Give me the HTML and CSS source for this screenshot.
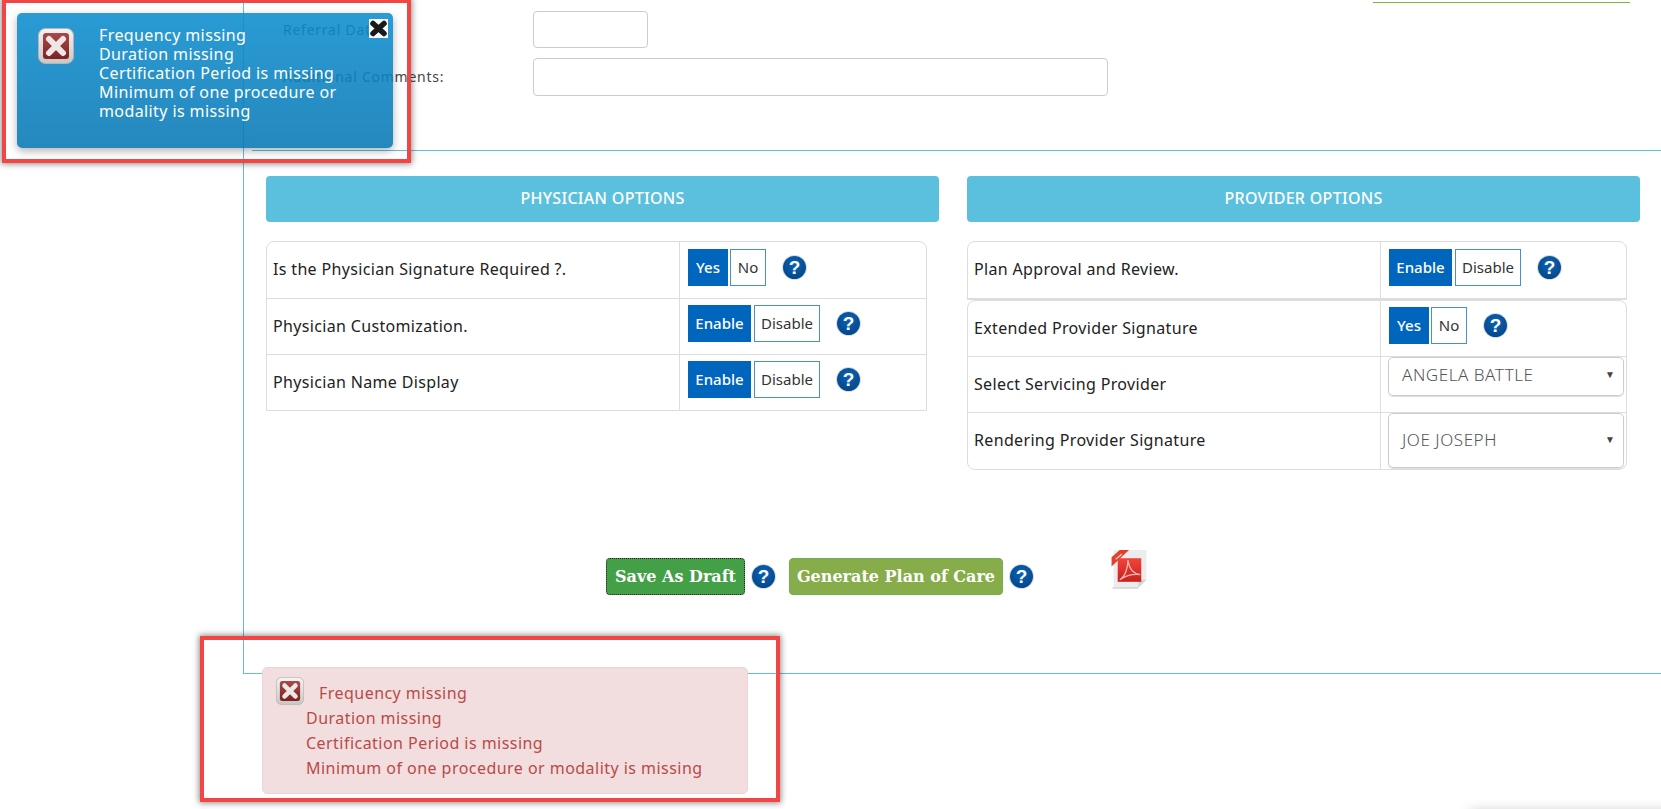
FILE: index.html
```html
<!DOCTYPE html>
<html lang="en">
<head>
<meta charset="utf-8">
<title>Plan of Care</title>
<link rel="stylesheet" href="styles.css">
</head>
<body>
<svg class="defs" width="0" height="0" aria-hidden="true">
  <defs>
    <linearGradient id="errframe" x1="0" y1="0" x2="0" y2="1">
      <stop offset="0" stop-color="#f6f3f2"/>
      <stop offset="1" stop-color="#c9c6c6"/>
    </linearGradient>
    <linearGradient id="errfill" x1="0" y1="0" x2="0" y2="1">
      <stop offset="0" stop-color="#a84a4a"/>
      <stop offset="1" stop-color="#7c2222"/>
    </linearGradient>
    <linearGradient id="pdfred" x1="0" y1="0" x2="0" y2="1">
      <stop offset="0" stop-color="#f0453a"/>
      <stop offset="1" stop-color="#c9201c"/>
    </linearGradient>
    <symbol id="erricon" viewBox="0 0 36 36">
      <rect x="0.5" y="0.5" width="35" height="35" rx="7" fill="url(#errframe)" stroke="#b5b5b5" stroke-width="1"/>
      <rect x="5" y="5" width="26" height="26" rx="3" fill="url(#errfill)"/>
      <path d="M11 11l14 14M25 11l-14 14" stroke="#efe6e6" stroke-width="6" stroke-linecap="round"/>
    </symbol>
  </defs>
</svg>

<div class="page">
  <div class="topline"></div>
  <main class="panel">
    <div class="form-row first">
      <label class="form-label">Referral Date:</label>
      <input class="field short" type="text">
    </div>
    <div class="form-row second">
      <label class="form-label">Additional Comments:</label>
      <input class="field long" type="text">
    </div>
    <div class="rule"></div>
    <div class="columns">
      <section class="col">
        <h2 class="col-head">PHYSICIAN OPTIONS</h2>
        <div class="table wide">
          <div class="row">
            <div class="cell-label">Is the Physician Signature Required ?.</div>
            <div class="cell-ctl">
              <span class="tgl on yes">Yes</span><span class="tgl off no">No</span><span class="help">?</span>
            </div>
          </div>
          <div class="row">
            <div class="cell-label">Physician Customization.</div>
            <div class="cell-ctl tight">
              <span class="tgl on en">Enable</span><span class="tgl off dis">Disable</span><span class="help">?</span>
            </div>
          </div>
          <div class="row">
            <div class="cell-label">Physician Name Display</div>
            <div class="cell-ctl tight">
              <span class="tgl on en">Enable</span><span class="tgl off dis">Disable</span><span class="help">?</span>
            </div>
          </div>
        </div>
      </section>
      <section class="col">
        <h2 class="col-head">PROVIDER OPTIONS</h2>
        <div class="table">
          <div class="row">
            <div class="cell-label">Plan Approval and Review.</div>
            <div class="cell-ctl">
              <span class="tgl on en">Enable</span><span class="tgl off dis">Disable</span><span class="help">?</span>
            </div>
          </div>
        </div>
        <div class="table multi">
          <div class="row">
            <div class="cell-label">Extended Provider Signature</div>
            <div class="cell-ctl tight">
              <span class="tgl on yes">Yes</span><span class="tgl off no">No</span><span class="help">?</span>
            </div>
          </div>
          <div class="row">
            <div class="cell-label">Select Servicing Provider</div>
            <div class="cell-ctl top">
              <div class="select s1"><span>ANGELA BATTLE</span><i class="caret">▼</i></div>
            </div>
          </div>
          <div class="row">
            <div class="cell-label">Rendering Provider Signature</div>
            <div class="cell-ctl top">
              <div class="select s2"><span>JOE JOSEPH</span><i class="caret">▼</i></div>
            </div>
          </div>
        </div>
      </section>
    </div>
    <div class="actions">
      <button class="btn draft" type="button">Save As Draft</button><span class="help big">?</span>
      <button class="btn generate" type="button">Generate Plan of Care</button><span class="help big">?</span>
      <svg class="pdf" viewBox="0 0 36 40" aria-hidden="true">
        <path d="M2 1h32v29l-8 8H2z" fill="#ececee"/>
        <path d="M26 38v-8h8z" fill="#d4d4d6"/>
        <rect x="1" y="37" width="25" height="2" fill="#dcdcdc"/>
        <rect x="6" y="9" width="23" height="23" fill="url(#pdfred)"/>
        <path d="M8 30c5-3 8-11 8-19 1 7 4 13 12 14-8-1-14 1-20 5z" fill="none" stroke="#f3b9b2" stroke-width="1.3"/>
        <path d="M0 8v9L17 1H8z" fill="#e2402f"/>
        <path d="M4 10l6-5" stroke="#f4c0b8" stroke-width="1.4"/>
      </svg>
    </div>
  </main>

  <div class="alert">
    <svg class="alert-icon" aria-hidden="true"><use href="#erricon"/></svg>
    <div class="alert-text">
      <div class="alert-first">Frequency missing</div>
      <div>Duration missing</div>
      <div>Certification Period is missing</div>
      <div>Minimum of one procedure or modality is missing</div>
    </div>
  </div>
  <div class="callout callout-bottom"></div>

  <div class="toast">
    <svg class="toast-icon" aria-hidden="true"><use href="#erricon"/></svg>
    <div class="toast-text">
      <div>Frequency missing</div>
      <div>Duration missing</div>
      <div>Certification Period is missing</div>
      <div>Minimum of one procedure or modality is missing</div>
    </div>
    <svg class="toast-close" viewBox="0 0 19 19" aria-hidden="true">
      <rect width="19" height="19" fill="#fff"/>
      <path d="M4 4.5l11 10M15 4.5l-11 10" stroke="#1a1a1a" stroke-width="5.5" stroke-linecap="round"/>
    </svg>
  </div>
  <div class="callout callout-top"></div>
  <div class="corner-shade"></div>
</div>
</body>
</html>
```

FILE: styles.css
```css
* { box-sizing: border-box; }
html, body { margin: 0; padding: 0; background: #fff; }
body { font-family: "Noto Sans", "DejaVu Sans", sans-serif; font-size: 16px; color: #222; overflow: hidden; }
.defs { position: absolute; }

.page { position: relative; width: 1661px; height: 809px; overflow: hidden; background: #fff; }
.topline { position: absolute; left: 1373px; top: 2px; width: 257px; height: 1px; background: #7fb539; }

.panel {
  margin-left: 243px;
  height: 674px;
  border-left: 1px solid #5fbfdf;
  border-bottom: 1px solid #5fbfdf;
  display: flex;
  flex-direction: column;
}

.form-row { display: flex; align-items: center; padding-left: 39px; }
.form-row.first { margin-top: 11px; height: 37px; }
.form-row.second { margin-top: 10px; height: 38px; }
.form-label { width: 250px; font-size: 14px; color: #444; letter-spacing: 0.75px; padding-bottom: 1px; }
.field { height: 100%; border: 1px solid #ccc; border-radius: 4px; background: #fff; }
.field.short { width: 115px; }
.field.long { width: 575px; }

.rule { margin: 54px 0 0 8px; height: 1px; background: #5fc0de; }

.columns { display: flex; margin: 25px 21px 0 22px; gap: 28px; }
.col { width: 673px; }
.col-head {
  margin: 0 0 19px;
  height: 46px;
  line-height: 44px;
  text-align: center;
  font-size: 16px;
  font-weight: 500;
  letter-spacing: 0.3px;
  color: #fff;
  background: #5bc0de;
  border-radius: 4px;
}

.table { width: 660px; border: 1px solid #ddd; border-radius: 8px 8px 0 0; }
.table.wide { width: 661px; border-radius: 8px 8px 0 0; }
.table.multi { border-radius: 8px; }
.row { display: flex; height: 56px; border-bottom: 1px solid #ddd; }
.row:first-child { height: 57px; }
.row:last-child:not(:first-child) { border-bottom: 0; }
.wide .row:last-child { height: 55px; }
.multi .row:first-child { height: 56px; }
.cell-label { width: 413px; padding: 0 6px 2px; display: flex; align-items: center; font-size: 16px; letter-spacing: 0.34px; color: #222; border-right: 1px solid #ddd; }
.cell-ctl { flex: 1; display: flex; align-items: flex-start; padding: 7px 0 0 8px; }
.cell-ctl.tight { padding-top: 6px; }
.cell-ctl.top { padding: 0 0 0 7px; }

.tgl { height: 37px; display: flex; align-items: center; justify-content: center; font-size: 15px; padding-bottom: 2px; }
.tgl.on { background: #0065bd; color: #fff; border: 1px solid #0065bd; font-weight: 500; }
.tgl.off { background: #fff; color: #333; border: 1px solid #4a90c8; margin-left: 2px; font-weight: 400; }
.tgl.yes { width: 40px; }
.tgl.no { width: 36px; }
.tgl.en { width: 63px; }
.tgl.dis { width: 66px; margin-left: 3px; }

.help {
  width: 23px; height: 23px; margin: 7px 0 0 17px;
  border-radius: 50%;
  background: radial-gradient(circle at 50% 35%, #0b62b5, #03407f);
  box-shadow: 0 0 0 1px #d5dbe2;
  color: #fff;
  font-family: "Liberation Sans", sans-serif;
  font-size: 19px; font-weight: 700; line-height: 23px; text-align: center;
}

.select {
  width: 236px;
  border: 1px solid #ccc; border-radius: 5px;
  display: flex; justify-content: space-between; align-items: flex-start;
  padding: 5px 8px 0 13px;
  font-size: 17px; font-weight: 300; letter-spacing: 0.55px; color: #555;
  line-height: 24px;
  box-shadow: 0 1px 1px #ddd;
}
.select.s1 { height: 39px; }
.select.s2 { height: 55px; padding-top: 14px; }
.caret { font-style: normal; font-size: 10px; letter-spacing: 0; color: #444; line-height: 22px; }

.actions { display: flex; align-items: flex-start; margin: 88px 0 0 362px; position: relative; }
.btn {
  height: 37px; border-radius: 4px; color: #fff;
  font-family: "DejaVu Serif", serif; font-weight: 700; font-size: 16px; padding: 0;
}
.btn.draft { width: 139px; background: #43a047; border: 1px dotted #222; }
.btn.generate { width: 214px; margin-left: 14px; background: #86ad4a; border: 1px solid #6fb04e; }
.help.big { width: 23px; height: 23px; margin: 7px 0 0 7px; }
.pdf { position: absolute; left: 505px; top: -9px; width: 38px; height: 41px; }

.alert {
  position: absolute; left: 262px; top: 667px; width: 486px; height: 127px;
  background: #f2dede; border: 1px solid #ebd5d8; border-radius: 5px;
  color: #b94a48; font-size: 16px; line-height: 25px; letter-spacing: 0.46px;
}
.alert-icon { position: absolute; left: 13px; top: 9px; width: 28px; height: 28px; }
.alert-text { position: absolute; left: 43px; top: 13px; white-space: nowrap; }
.alert-first { padding-left: 13px; }

.toast {
  position: absolute; left: 17px; top: 13px; width: 376px; height: 135px;
  border-radius: 5px;
  background: linear-gradient(rgba(12,141,206,.88), rgba(7,120,180,.88));
  box-shadow: 0 3px 8px rgba(0,0,0,.3);
  color: #fff; font-size: 16px; line-height: 19px; letter-spacing: 0.4px;
}
.toast-icon { position: absolute; left: 21px; top: 15px; width: 36px; height: 36px; }
.toast-text { position: absolute; left: 82px; top: 13px; width: 255px; }
.toast-close { position: absolute; left: 352px; top: 6px; width: 19px; height: 19px; }

.callout { position: absolute; border: 4px solid #f44545; box-shadow: 0 0 6px 1px rgba(0,0,0,.45); }
.callout-top { left: 2px; top: -1px; width: 409px; height: 164px; }
.callout-bottom { left: 200px; top: 636px; width: 580px; height: 166px; }

.corner-shade { position: absolute; left: 1470px; top: 812px; width: 240px; height: 20px; background: #fff; box-shadow: 0 0 14px rgba(0,0,0,.25); }
```
